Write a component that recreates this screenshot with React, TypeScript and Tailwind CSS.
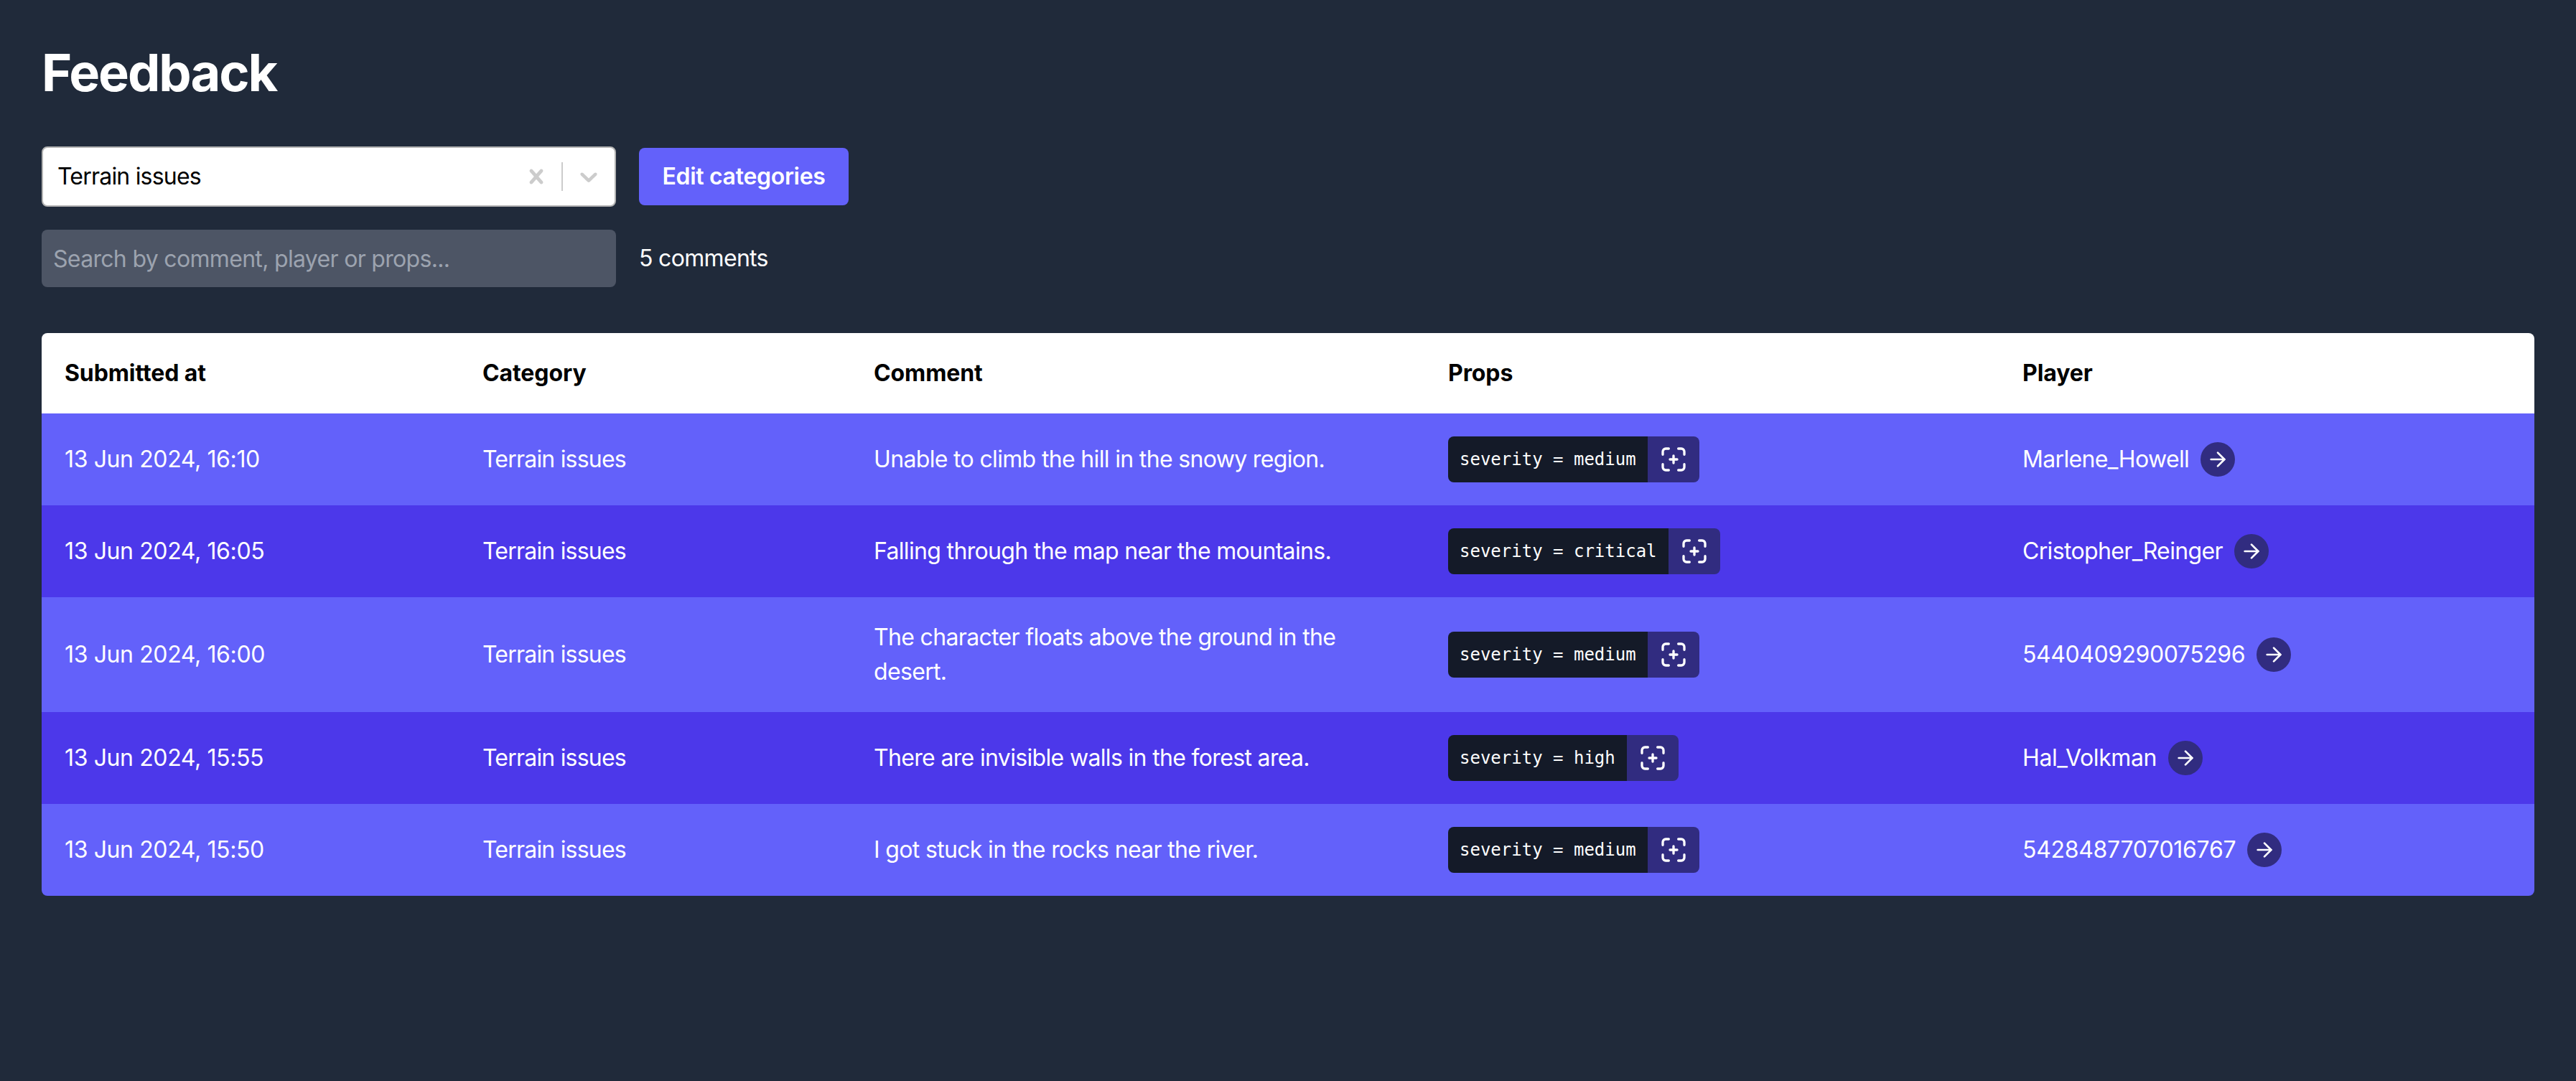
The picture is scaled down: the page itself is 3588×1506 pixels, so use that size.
import { ArrowRight } from "lucide-react";

const rows = [
  { at: "13 Jun 2024, 16:10", comment: "Unable to climb the hill in the snowy region.", props: "severity = medium", player: "Marlene_Howell", track: "tracking-[-0.65px]" },
  { at: "13 Jun 2024, 16:05", comment: "Falling through the map near the mountains.", props: "severity = critical", player: "Cristopher_Reinger", track: "tracking-[-0.65px]" },
  { at: "13 Jun 2024, 16:00", comment: "The character floats above the ground in the desert.", props: "severity = medium", player: "5440409290075296", track: "tracking-[-0.45px]" },
  { at: "13 Jun 2024, 15:55", comment: "There are invisible walls in the forest area.", props: "severity = high", player: "Hal_Volkman", track: "tracking-[-0.4px]" },
  { at: "13 Jun 2024, 15:50", comment: "I got stuck in the rocks near the river.", props: "severity = medium", player: "5428487707016767", track: "tracking-[-0.3px]" },
];

function ScanPlusIcon() {
  return (
    <svg width="40" height="40" viewBox="0 0 24 24" fill="none" stroke="currentColor" strokeWidth="2" strokeLinecap="round" strokeLinejoin="round">
      <path d="M3 8V5.5A2.5 2.5 0 0 1 5.5 3H8" />
      <path d="M16 3h2.5A2.5 2.5 0 0 1 21 5.5V8" />
      <path d="M21 16v2.500a2.500 2.500 0 0 1-2.500 2.500H16" />
      <path d="M8 21H5.500A2.500 2.500 0 0 1 3 18.500V16" />
      <path d="M12 9v6" />
      <path d="M9 12h6" />
    </svg>
  );
}

// same glyphs react-select draws
function CrossIcon() {
  return (
    <svg width="40" height="40" viewBox="0 0 20 20" fill="#cccccc">
      <path d="M14.348 14.849c-0.469 0.469-1.229 0.469-1.697 0l-2.651-3.030-2.651 3.029c-0.469 0.469-1.229 0.469-1.697 0-0.469-0.469-0.469-1.229 0-1.697l2.758-3.15-2.759-3.152c-0.469-0.469-0.469-1.228 0-1.697s1.228-0.469 1.697 0l2.652 3.031 2.651-3.031c0.469-0.469 1.228-0.469 1.697 0s0.469 1.229 0 1.697l-2.758 3.152 2.758 3.15c0.469 0.469 0.469 1.229 0 1.698z" />
    </svg>
  );
}

function ChevronIcon() {
  return (
    <svg width="40" height="40" viewBox="0 0 20 20" fill="#cccccc">
      <path d="M4.516 7.548c0.436-0.446 1.043-0.481 1.576 0l3.908 3.747 3.908-3.747c0.533-0.481 1.141-0.446 1.576 0 0.436 0.445 0.408 1.197 0 1.615-0.406 0.418-4.695 4.502-4.695 4.502-0.217 0.223-0.502 0.335-0.789 0.335s-0.572-0.112-0.791-0.335c0 0-4.287-4.084-4.695-4.502s-0.436-1.17 0-1.615z" />
    </svg>
  );
}

export default function App() {
  return (
    <div className="min-h-[1506px] bg-[#202a3a] px-[58px] pt-[55px] font-['Inter',sans-serif] text-[32px] leading-[48px] text-white">
      <h1 className="text-[72px] leading-[92px] font-bold tracking-[-2px]">Feedback</h1>

      <div className="mt-[57px] flex items-center gap-[32px]">
        <div className="flex h-[84px] w-[800px] items-center rounded-[8px] border-2 border-[#b3b3b3] bg-white pl-[20px] text-black">
          <span className="flex-1 tracking-[-0.8px]">Terrain issues</span>
          <span className="flex w-[70px] justify-center">
            <CrossIcon />
          </span>
          <span className="h-[40px] w-[2px] bg-[#cccccc]" />
          <span className="flex w-[72px] justify-center">
            <ChevronIcon />
          </span>
        </div>
        <button className="h-[80px] w-[292px] rounded-[8px] bg-[#6361fa] text-center font-semibold tracking-[-0.3px]">Edit categories</button>
      </div>

      <div className="mt-[32px] flex items-center gap-[32px]">
        <input
          className="h-[80px] w-[800px] rounded-[8px] bg-[#4d5565] px-[16px] tracking-[-0.68px] text-white outline-none placeholder:text-[#9ca3af]"
          placeholder="Search by comment, player or props..."
        />
        <span className="tracking-[-0.68px]">5 comments</span>
      </div>

      <div className="mt-[64px] overflow-hidden rounded-[8px]">
        <table className="w-full table-fixed border-collapse text-left">
          <colgroup>
            <col className="w-[582px]" />
            <col className="w-[545px]" />
            <col className="w-[800px]" />
            <col className="w-[800px]" />
            <col />
          </colgroup>
          <thead className="bg-white text-black">
            <tr className="tracking-[-0.1px]">
              <th className="h-[112px] px-[32px] font-bold">Submitted at</th>
              <th className="px-[32px] font-bold">Category</th>
              <th className="px-[32px] font-bold">Comment</th>
              <th className="px-[32px] font-bold">Props</th>
              <th className="px-[32px] font-bold">Player</th>
            </tr>
          </thead>
          <tbody>
            {rows.map((row, i) => (
              <tr key={row.at} className={i % 2 == 0 ? "bg-[#6361fa]" : "bg-[#4c38ea]"}>
                <td className="p-[32px] tracking-[-0.38px]">{row.at}</td>
                <td className="p-[32px] tracking-[-0.8px]">Terrain issues</td>
                <td className="p-[32px] tracking-[-0.66px]">{row.comment}</td>
                <td className="p-[32px]">
                  <div className="flex h-[64px] w-fit overflow-hidden rounded-[8px]">
                    <span className="flex items-center bg-[#141a28] px-[16px] font-['DejaVu_Sans_Mono',monospace] text-[24px]">{row.props}</span>
                    <span className="flex w-[72px] items-center justify-center bg-[#312c80]">
                      <ScanPlusIcon />
                    </span>
                  </div>
                </td>
                <td className="p-[32px]">
                  <div className="flex items-center gap-[16px]">
                    <span className={row.track}>{row.player}</span>
                    <span className="flex h-[48px] w-[48px] items-center justify-center rounded-full bg-[#312c80]">
                      <ArrowRight size={32} strokeWidth={2} />
                    </span>
                  </div>
                </td>
              </tr>
            ))}
          </tbody>
        </table>
      </div>
    </div>
  );
}
